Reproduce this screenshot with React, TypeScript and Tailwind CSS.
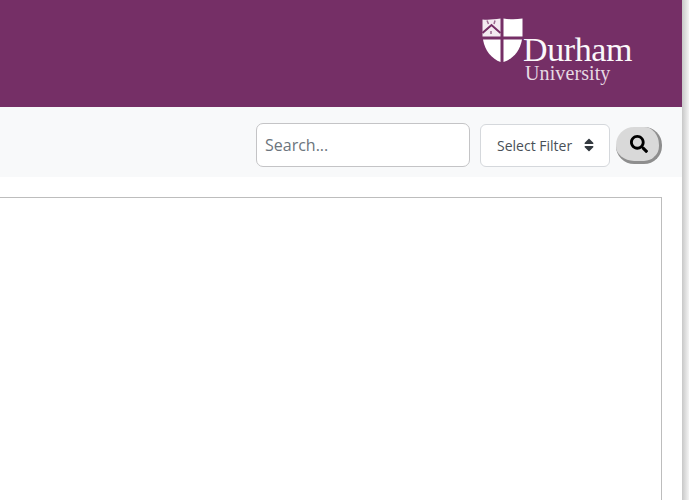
import { FaSearch, FaSort } from 'react-icons/fa';

function Shield() {
  return (
    <svg width="41" height="45" viewBox="0 0 41 45" className="block">
      <path d="M0.5 1.5 C6 2 12 1.5 18.5 0.5 V18.5 H0.5 Z" fill="#f3eaf1" />
      <path d="M21.5 0.5 C28 1.5 34 1.5 40.5 0.5 V18.5 H21.5 Z" fill="#fff" />
      <path d="M1 21.5 H18.5 V44 C10 41 3 33 1 21.5 Z" fill="#fff" />
      <path d="M21.5 21.5 H40 C38 33 31 41 21.5 44 Z" fill="#fff" />
      <path d="M0.5 15 L9.5 7 L18.5 15" fill="none" stroke="#752f66" strokeWidth="2" />
      <path d="M4 12 L9.5 7.5 L15 12" fill="none" stroke="#752f66" strokeWidth="1" />
      <path d="M5 2.5 L6.5 6 M13 2.5 L12 6 M9 13 L9 16" stroke="#9b6a90" strokeWidth="1.5" />
    </svg>
  );
}

function App() {
  return (
    <div className="flex h-[500px] w-[689px] overflow-hidden bg-white font-['Open_Sans',sans-serif]">
      <div className="flex w-[682px] flex-col">
        <header className="flex h-[107px] justify-end bg-[#752f66] pr-[50px]">
          <div className="relative mt-[18px] h-[66px] w-[150px]">
            <div className="absolute left-0 top-0">
              <Shield />
            </div>
            <span className="absolute left-[41px] top-[18px] font-['Liberation_Serif',serif] text-[34px] leading-[28px] tracking-[-0.4px] text-[#fbf8fa]">
              Durham
            </span>
            <span className="absolute left-[43px] top-[46px] font-['Liberation_Serif',serif] text-[20px] leading-[18px] tracking-[0.1px] text-[#e6d9e3]">
              University
            </span>
          </div>
        </header>

        <div className="flex h-[70px] items-center justify-end bg-[#f8f9fa] pt-[6px] pr-5">
          <div className="flex h-[44px] w-[214px] items-center rounded-[7px] border border-[#c4c4c6] bg-white pl-2 text-[16px] text-[#6c757d]">
            Search...
          </div>
          <div className="ml-[10px] flex h-[43px] w-[130px] items-center rounded-md border border-[#d5d8dc] bg-white pl-4 text-[14px] text-[#495057]">
            Select Filter
            <FaSort size={16} className="ml-[9px] text-[#343a40]" />
          </div>
          <button className="ml-[6px] flex h-[37px] w-[46px] items-center justify-center rounded-[18px] border-r-[3px] border-b-[3px] border-[#8e8e8e] bg-[#d9d9d9] pl-[2px]">
            <FaSearch size={18} className="text-black" />
          </button>
        </div>

        <div className="flex-1 pt-5 pr-5">
          <div className="h-full border-t border-r border-[#bdbdbd] bg-white" />
        </div>
      </div>
      <div className="w-[7px] bg-gradient-to-r from-[#c8c8c8] to-[#f4f4f4]" />
    </div>
  );
}

export default App;
